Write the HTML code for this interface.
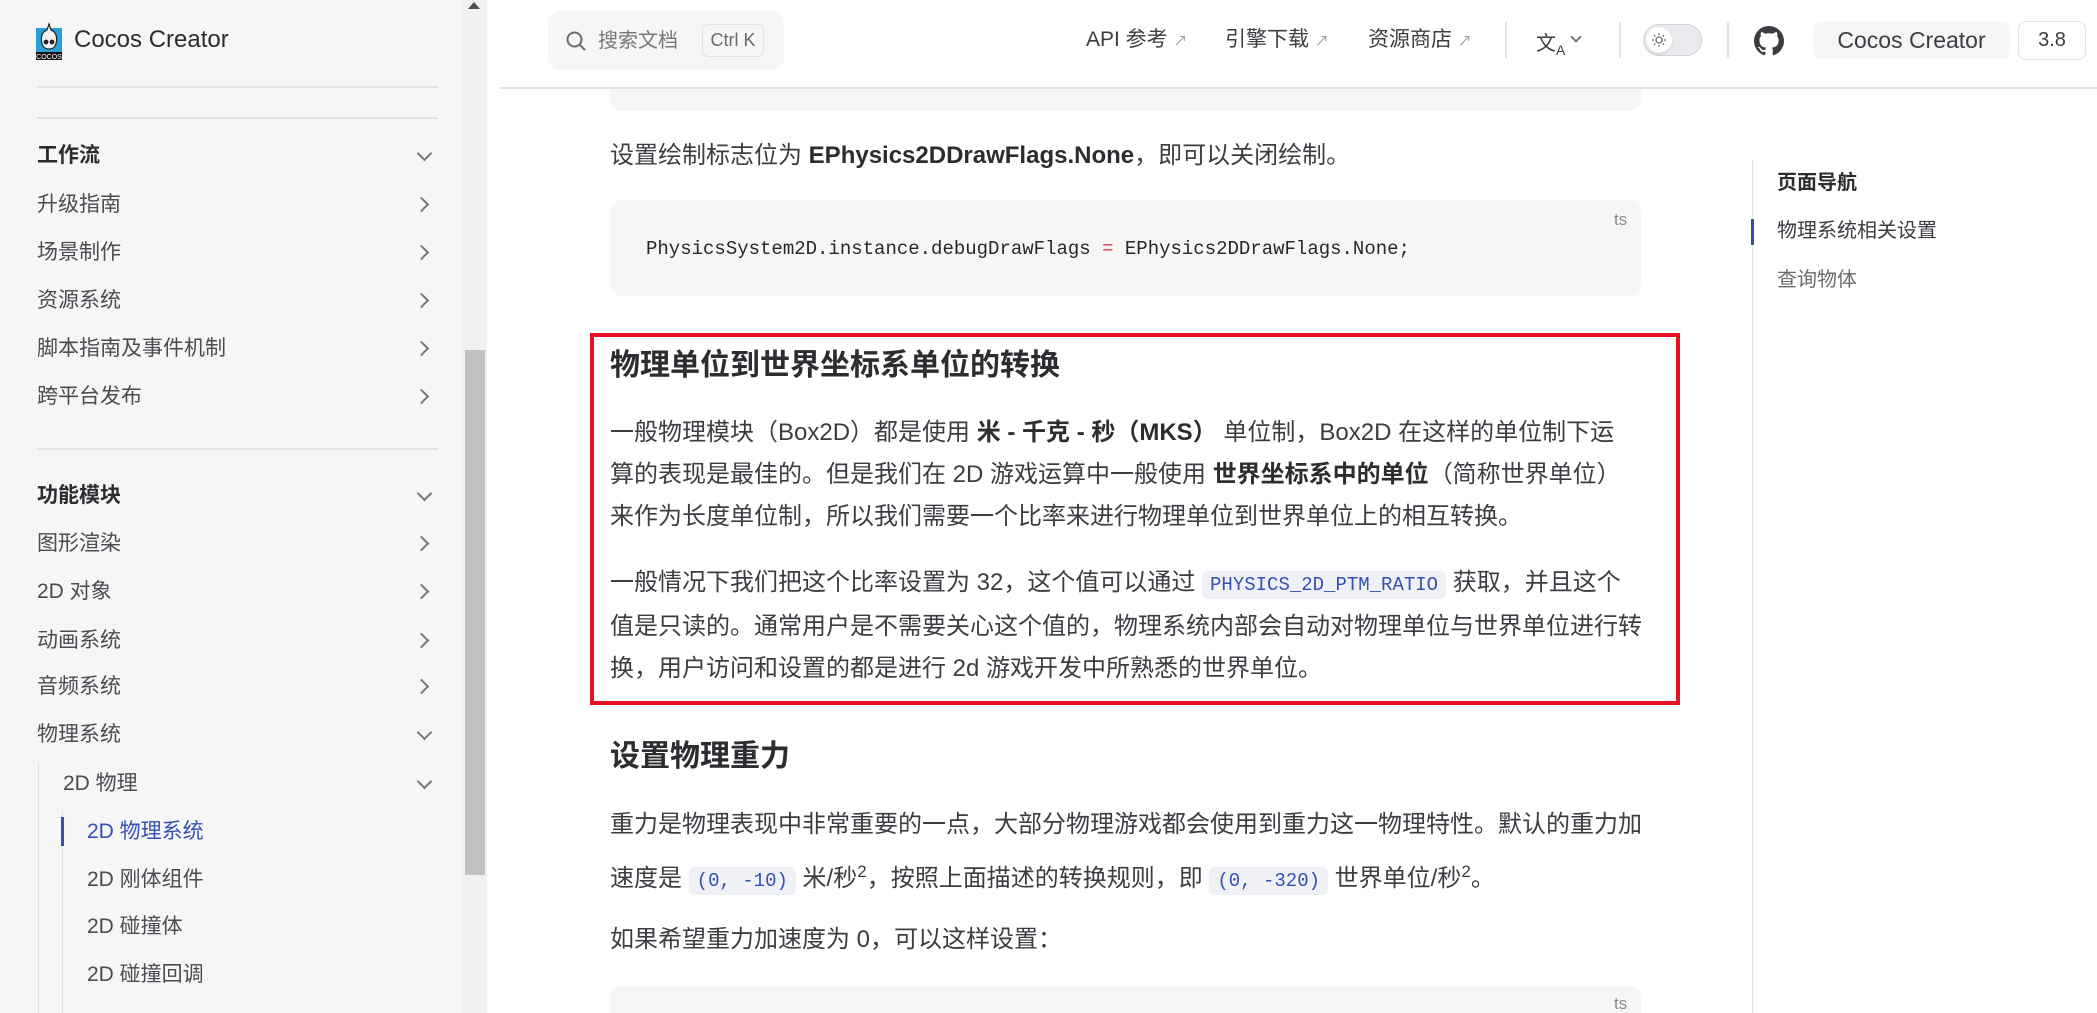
<!DOCTYPE html>
<html style="overflow:hidden;height:1013px"><head><meta charset="utf-8">
<style>
*{margin:0;padding:0;box-sizing:border-box}
body{width:2097px;height:1013px;overflow:hidden;background:#fff;font-family:"Liberation Sans","Noto Sans CJK SC",sans-serif;color:#3c3c43;position:relative}
.abs{position:absolute;white-space:nowrap}
#side{position:absolute;left:0;top:0;width:463px;height:1013px;background:#f6f6f7}
#track{position:absolute;left:463px;top:0;width:24px;height:1013px;background:#f1f1f1}
#thumb{position:absolute;left:465px;top:350px;width:20px;height:525px;background:#c1c1c1}
.sep{position:absolute;left:37px;width:401px;height:2px;background:#e2e2e3}
.si{position:absolute;font-size:21px;line-height:30px;color:#4b4b52;white-space:nowrap}
.sh{font-weight:700;color:#2c2c31}
.chev{position:absolute;width:11px;height:11px;border-right:2px solid #77777d;border-bottom:2px solid #77777d}
.cr{transform:rotate(-45deg)}
.cd{transform:rotate(45deg)}
.nav{position:absolute;top:26px;font-size:21px;line-height:28px;color:#3c3c43}
.nav small{font-size:14px;color:#999}
.vd{position:absolute;top:22px;width:2px;height:36px;background:#e2e2e3}
.code{position:absolute;left:610px;width:1031px;background:#f6f6f7;border-radius:12px}
.mono{font-family:"Liberation Mono","DejaVu Sans Mono",monospace}
.p{position:absolute;left:610px;font-size:24px;line-height:42px;white-space:nowrap;color:#3c3c43}
.ic{font-family:"Liberation Mono",monospace;font-size:19px;color:#3451b2;background:#eff1f6;border-radius:6px;padding:3px 8px}
b{color:#2c2c31}
h2{position:absolute;left:610px;font-size:30px;line-height:40px;font-weight:700;color:#2c2c31;white-space:nowrap}
</style></head><body>
<div id="side"></div>
<div id="track"></div><div id="thumb"></div>
<div class="abs" style="left:468px;top:2px;width:0;height:0;border-left:6px solid transparent;border-right:6px solid transparent;border-bottom:7px solid #505050"></div>

<svg class="abs" style="left:36px;top:22px" width="26" height="38" viewBox="0 0 26 38">
<rect x="0" y="6" width="26" height="26" fill="#2a9fd6"/>
<path d="M13 2 L15 8 C21 10 22 18 19 24 C17 28 9 28 7 24 C4 18 5 10 11 8 Z" fill="#f2f2f2" stroke="#222" stroke-width="1.2"/>
<circle cx="10" cy="20" r="2.4" fill="#222"/><circle cx="16" cy="20" r="2.4" fill="#222"/>
<rect x="0" y="30" width="26" height="8" fill="#111"/>
<text x="13" y="37" font-size="7" fill="#fff" text-anchor="middle" font-family="Liberation Sans">COCOS</text>
</svg>
<div class="abs" style="left:74px;top:25px;font-size:24px;line-height:30px;font-weight:500;color:#2c2c31">Cocos Creator</div>

<div class="sep" style="top:86px"></div>
<div class="sep" style="top:117px"></div>
<div class="sep" style="top:448px"></div>

<div class="si sh" style="left:37px;top:141px">工作流</div><div class="chev cd" style="left:419px;top:148px"></div>
<div class="si" style="left:37px;top:190px">升级指南</div><div class="chev cr" style="left:416px;top:199px"></div>
<div class="si" style="left:37px;top:238px">场景制作</div><div class="chev cr" style="left:416px;top:247px"></div>
<div class="si" style="left:37px;top:286px">资源系统</div><div class="chev cr" style="left:416px;top:295px"></div>
<div class="si" style="left:37px;top:334px">脚本指南及事件机制</div><div class="chev cr" style="left:416px;top:343px"></div>
<div class="si" style="left:37px;top:382px">跨平台发布</div><div class="chev cr" style="left:416px;top:391px"></div>

<div class="si sh" style="left:37px;top:481px">功能模块</div><div class="chev cd" style="left:419px;top:488px"></div>
<div class="si" style="left:37px;top:529px">图形渲染</div><div class="chev cr" style="left:416px;top:538px"></div>
<div class="si" style="left:37px;top:577px">2D 对象</div><div class="chev cr" style="left:416px;top:586px"></div>
<div class="si" style="left:37px;top:626px">动画系统</div><div class="chev cr" style="left:416px;top:635px"></div>
<div class="si" style="left:37px;top:672px">音频系统</div><div class="chev cr" style="left:416px;top:681px"></div>
<div class="si" style="left:37px;top:720px">物理系统</div><div class="chev cd" style="left:419px;top:727px"></div>
<div class="abs" style="left:38px;top:762px;width:1px;height:251px;background:#e2e2e3"></div>
<div class="si" style="left:63px;top:769px">2D 物理</div><div class="chev cd" style="left:419px;top:776px"></div>
<div class="abs" style="left:62px;top:810px;width:1px;height:203px;background:#e2e2e3"></div>
<div class="abs" style="left:61px;top:817px;width:3px;height:29px;background:#3451b2"></div>
<div class="si" style="left:87px;top:817px;color:#3451b2">2D 物理系统</div>
<div class="si" style="left:87px;top:865px">2D 刚体组件</div>
<div class="si" style="left:87px;top:912px">2D 碰撞体</div>
<div class="si" style="left:87px;top:960px">2D 碰撞回调</div>

<!-- main -->
<div class="code" style="top:60px;height:51px"></div>
<div class="p" style="top:135px">设置绘制标志位为 <b>EPhysics2DDrawFlags.None</b>，即可以关闭绘制。</div>
<div class="code" style="top:200px;height:96px"></div>
<div class="abs" style="left:1614px;top:210px;font-size:17px;color:#8a8a90">ts</div>
<div class="abs mono" style="left:646px;top:236px;font-size:19px;line-height:26px;color:#24292e">PhysicsSystem2D.instance.debugDrawFlags <span style="color:#d73a49">=</span> EPhysics2DDrawFlags.None;</div>

<h2 style="top:346px">物理单位到世界坐标系单位的转换</h2>
<div class="p" style="top:412px">一般物理模块（Box2D）都是使用 <b>米 - 千克 - 秒（MKS）</b> 单位制，Box2D 在这样的单位制下运<br>算的表现是最佳的。但是我们在 2D 游戏运算中一般使用 <b>世界坐标系中的单位</b>（简称世界单位）<br>来作为长度单位制，所以我们需要一个比率来进行物理单位到世界单位上的相互转换。</div>
<div class="p" style="top:562px">一般情况下我们把这个比率设置为 32，这个值可以通过 <span class="ic">PHYSICS_2D_PTM_RATIO</span> 获取，并且这个<br>值是只读的。通常用户是不需要关心这个值的，物理系统内部会自动对物理单位与世界单位进行转<br>换，用户访问和设置的都是进行 2d 游戏开发中所熟悉的世界单位。</div>
<div class="abs" style="left:590px;top:333px;width:1090px;height:372px;border:4px solid #e81123"></div>

<h2 style="top:737px">设置物理重力</h2>
<div class="p" style="top:804px">重力是物理表现中非常重要的一点，大部分物理游戏都会使用到重力这一物理特性。默认的重力加</div>
<div class="p" style="top:851px">速度是 <span class="ic">(0, -10)</span> 米/秒<sup style="font-size:17px">2</sup>，按照上面描述的转换规则，即 <span class="ic">(0, -320)</span> 世界单位/秒<sup style="font-size:17px">2</sup>。</div>
<div class="p" style="top:919px">如果希望重力加速度为 0，可以这样设置：</div>
<div class="code" style="top:986px;height:27px;border-radius:12px 12px 0 0"></div>
<div class="abs" style="left:1614px;top:994px;font-size:17px;color:#8a8a90">ts</div>

<!-- header -->
<div class="abs" style="left:487px;top:0;width:1610px;height:87px;background:#fff"></div>
<div class="abs" style="left:500px;top:87px;width:1597px;height:2px;background:#e2e2e3"></div>
<div class="abs" style="left:548px;top:11px;width:236px;height:59px;background:#f6f6f7;border-radius:12px"></div>
<svg class="abs" style="left:565px;top:30px" width="22" height="22" viewBox="0 0 22 22"><circle cx="9.5" cy="9.5" r="7" fill="none" stroke="#6a6a70" stroke-width="2"/><path d="M14.5 14.5 L20 20" stroke="#6a6a70" stroke-width="2"/></svg>
<div class="abs" style="left:598px;top:27px;font-size:20px;line-height:28px;color:#77777d">搜索文档</div>
<div class="abs" style="left:702px;top:24px;width:62px;height:33px;border:1px solid #e2e2e3;border-radius:6px;font-size:18px;line-height:31px;text-align:center;color:#6a6a70">Ctrl K</div>

<div class="nav" style="left:1086px">API 参考 <small>↗</small></div>
<div class="nav" style="left:1225px">引擎下载 <small>↗</small></div>
<div class="nav" style="left:1368px">资源商店 <small>↗</small></div>
<div class="vd" style="left:1505px"></div>
<div class="abs" style="left:1536px;top:27px;font-size:20px;color:#3c3c43">文<sub style="font-size:14px">A</sub></div>
<div class="chev cd" style="left:1572px;top:33px;width:8px;height:8px"></div>
<div class="vd" style="left:1619px"></div>
<div class="abs" style="left:1643px;top:24px;width:59px;height:32px;border:1px solid #d2d2d6;border-radius:16px;background:#ebebef"></div>
<div class="abs" style="left:1646px;top:27px;width:26px;height:26px;border-radius:50%;background:#fff;box-shadow:0 1px 2px rgba(0,0,0,.15)"></div>
<svg class="abs" style="left:1651px;top:32px" width="16" height="16" viewBox="0 0 16 16"><circle cx="8" cy="8" r="3" fill="none" stroke="#666" stroke-width="1.2"/><path d="M8 1v2M8 13v2M1 8h2M13 8h2M3 3l1.4 1.4M11.6 11.6L13 13M3 13l1.4-1.4M11.6 4.4L13 3" stroke="#666" stroke-width="1.2"/></svg>
<div class="vd" style="left:1727px"></div>
<svg class="abs" style="left:1754px;top:26px" width="30" height="30" viewBox="0 0 16 16"><path fill="#3c3c43" d="M8 0C3.580 0 0 3.58 0 8c0 3.54 2.29 6.53 5.47 7.59.4.07.55-.17.55-.38 0-.19-.01-.82-.01-1.49-2.01.37-2.530-.49-2.69-.94-.09-.23-.48-.94-.82-1.13-.28-.15-.68-.52-.01-.53.63-.01 1.08.58 1.23.82.72 1.21 1.87.87 2.33.66.07-.52.28-.87.51-1.07-1.78-.2-3.64-.89-3.64-3.95 0-.87.31-1.59.82-2.15-.08-.2-.36-1.020.08-2.12 0 0 .67-.21 2.2.82.64-.18 1.32-.27 2-.27.68 0 1.36.09 2 .27 1.53-1.04 2.2-.82 2.2-.82.44 1.1.16 1.92.08 2.12.51.56.82 1.27.82 2.15 0 3.07-1.87 3.75-3.65 3.95.29.25.54.73.54 1.48 0 1.07-.01 1.93-.01 2.2 0 .21.15.46.55.38A8.013 8.013 0 0016 8c0-4.42-3.58-8-8-8z"/></svg>
<div class="abs" style="left:1813px;top:22px;width:197px;height:37px;background:#f6f6f7;border-radius:8px;font-size:23px;line-height:37px;text-align:center;color:#3c3c43">Cocos Creator</div>
<div class="abs" style="left:2018px;top:21px;width:68px;height:39px;border:1px solid #e2e2e3;border-radius:8px;font-size:20px;line-height:37px;text-align:center;color:#3c3c43">3.8</div>

<!-- TOC -->
<div class="abs" style="left:1752px;top:160px;width:1px;height:853px;background:#e2e2e3"></div>
<div class="abs" style="left:1751px;top:219px;width:3px;height:26px;background:#3451b2"></div>
<div class="abs" style="left:1777px;top:168px;font-size:20px;line-height:30px;font-weight:700;color:#2c2c31">页面导航</div>
<div class="abs" style="left:1777px;top:216px;font-size:20px;line-height:30px;color:#3c3c43">物理系统相关设置</div>
<div class="abs" style="left:1777px;top:265px;font-size:20px;line-height:30px;color:#6a6a70">查询物体</div>
</body></html>
